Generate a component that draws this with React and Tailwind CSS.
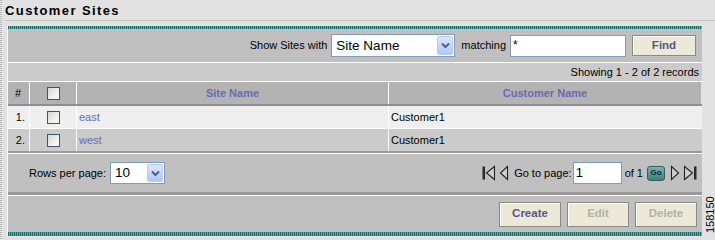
import React from "react";

const TEAL = "bg-[repeating-linear-gradient(90deg,#1d6b67_0px,#1d6b67_1px,#6aaaa5_1px,#6aaaa5_2px)]";

function Chevron() {
  return (
    <svg width="9" height="7" viewBox="0 0 9 7">
      <path d="M1 1.5 L4.5 5 L8 1.5" fill="none" stroke="#4d6185" strokeWidth="2" />
    </svg>
  );
}

function XpSelect({ value, className, textClass }) {
  return (
    <div className={`flex items-stretch bg-white border border-[#7f9db9] ${className}`}>
      <span className={`flex-1 pl-[4px] flex items-center leading-none text-black ${textClass}`}>{value}</span>
      <div className="w-[16px] m-px flex items-center justify-center rounded-[2px] border border-[#b8cbf5] bg-gradient-to-b from-[#dbe6fd] to-[#b3c7f5]">
        <Chevron />
      </div>
    </div>
  );
}

function Checkbox() {
  return <div className="w-[13px] h-[13px] border border-[#3d5670] bg-gradient-to-br from-[#d8d8d0] to-white" />;
}

function NavIcon({ dir, bar }) {
  const left = dir === "left";
  return (
    <svg width={bar ? 14 : 10} height="16" viewBox={bar ? "0 0 14 16" : "0 0 10 16"}>
      {bar && left && <rect x="0.5" y="1.5" width="2.5" height="13" fill="#2a2a2a" />}
      {left ? (
        <path d={bar ? "M12.5 1.5 L4.5 8 L12.5 14.5 Z" : "M8.5 1.5 L1.5 8 L8.5 14.5 Z"} fill="#cfcfcf" stroke="#222" strokeWidth="1.1" />
      ) : (
        <path d={bar ? "M1.5 1.5 L9.5 8 L1.5 14.5 Z" : "M1.5 1.5 L8.5 8 L1.5 14.5 Z"} fill="#cfcfcf" stroke="#222" strokeWidth="1.1" />
      )}
      {bar && !left && <rect x="11" y="1.5" width="2.5" height="13" fill="#2a2a2a" />}
    </svg>
  );
}

function Btn({ label, disabled, className = "" }) {
  return (
    <div
      className={`flex items-center justify-center bg-[#ece9d8] border border-[#8a8a80] shadow-[inset_1px_1px_0_#fff] font-bold text-[11.5px] ${
        disabled ? "text-[#b2b2a8]" : "text-[#555586]"
      } ${className}`}
    >
      {label}
    </div>
  );
}

export default function App() {
  return (
    <div className="relative w-[715px] h-[240px] overflow-hidden bg-[#e2e2e2] font-['Liberation_Sans',Arial,sans-serif] text-[11px] text-black">
      {/* scan edge */}
      <div className="absolute left-0 top-0 w-[2px] h-full bg-[repeating-linear-gradient(180deg,#b8b8b8_0px,#b8b8b8_1px,#e8e8e8_1px,#e8e8e8_2px)]" />

      <div className="h-[20px] pl-[5px] pt-[3px] font-bold text-[13px] tracking-[1.4px] leading-[15px]">Customer Sites</div>
      <div className="ml-[5px] h-px bg-[#c6c6be]" />

      <div className="ml-[7px] mt-[5px] w-[695px] border-l border-white">
        <div className={`h-[3px] ${TEAL}`} />

        {/* search band */}
        <div className="h-[33px] bg-[#c0c0c0] flex items-center justify-end pr-[6px]">
          <span className="mr-[4px]">Show Sites with</span>
          <XpSelect value="Site Name" className="w-[124px] h-[23px]" textClass="text-[13.5px]" />
          <span className="ml-[6px] mr-[4px]">matching</span>
          <div className="w-[116px] h-[22px] bg-white border border-[#7f9db9] pl-[2px] text-[12px] leading-[18px]">*</div>
          <Btn label="Find" className="ml-[6px] w-[64px] h-[21px]" />
        </div>
        <div className="h-px bg-white" />

        {/* showing band */}
        <div className="h-[18px] bg-[#cbcbcb] flex items-center justify-end pr-[3px]">Showing 1 - 2 of 2 records</div>
        <div className="h-px bg-white" />

        {/* table */}
        <div className="grid grid-cols-[22px_47px_312px_312px]">
          <div className="h-[22px] bg-[#b3b3b3] border-r border-white flex items-center pl-[7px]">#</div>
          <div className="h-[22px] bg-[#b3b3b3] border-r border-white flex items-center pl-[17px]">
            <Checkbox />
          </div>
          <div className="h-[22px] bg-[#b3b3b3] border-r border-white flex items-center justify-center font-bold text-[#6a6ab4]">Site Name</div>
          <div className="h-[22px] bg-[#b3b3b3] flex items-center justify-center font-bold text-[#6a6ab4]">Customer Name</div>
        </div>
        <div className="h-[2px] bg-[#8e8e8e]" />

        {[
          { n: "1.", site: "east", bg: "bg-[#efefef]" },
          { n: "2.", site: "west", bg: "bg-[#cbcbcb]" },
        ].map((r, i) => (
          <React.Fragment key={r.n}>
            {i > 0 && <div className="h-px bg-white" />}
            <div className={`grid grid-cols-[22px_47px_312px_312px] h-[22px] ${r.bg}`}>
              <div className="border-r border-white flex items-center justify-end pr-[4px]">{r.n}</div>
              <div className="border-r border-white flex items-center pl-[17px]">
                <Checkbox />
              </div>
              <div className="border-r border-white flex items-center pl-[2px] text-[#6a6ab4]">{r.site}</div>
              <div className="flex items-center pl-[2px]">Customer1</div>
            </div>
          </React.Fragment>
        ))}
        <div className="h-[2px] bg-[#999]" />
        <div className="h-px bg-white" />

        {/* pagination band */}
        <div className="h-[38px] bg-[#c0c0c0] flex items-center pl-[21px] pr-[5px]">
          <span className="text-[11px] mr-[4px]">Rows per page:</span>
          <XpSelect value="10" className="w-[55px] h-[22px]" textClass="text-[13.5px]" />
          <div className="flex-1" />
          <NavIcon dir="left" bar />
          <div className="w-[3px]" />
          <NavIcon dir="left" />
          <span className="ml-[5px] mr-px text-[11px]">Go to page:</span>
          <div className="w-[49px] h-[22px] bg-white border border-[#7f9db9] pl-[2px] text-[13px] leading-[20px]">1</div>
          <span className="ml-[3px] text-[11px]">of 1</span>
          <div className="ml-[4px] w-[18px] h-[15px] rounded-[3px] border border-[#2f5f5f] bg-gradient-to-b from-[#7cb1ae] to-[#3f7e7c] flex items-center justify-center text-[8px] font-bold text-[#0c2a2a]">Go</div>
          <div className="w-[5px]" />
          <NavIcon dir="right" />
          <div className="w-[3px]" />
          <NavIcon dir="right" bar />
        </div>
        <div className="h-[3px] bg-[#999]" />
        <div className="h-px bg-white" />

        {/* buttons band */}
        <div className="h-[36px] bg-[#c0c0c0] flex items-center justify-end gap-[6px] pr-[5px]">
          <Btn label="Create" className="w-[62px] h-[25px]" />
          <Btn label="Edit" disabled className="w-[62px] h-[25px]" />
          <Btn label="Delete" disabled className="w-[62px] h-[25px]" />
        </div>
        <div className={`h-[4px] ${TEAL}`} />
      </div>

      <div className="absolute left-[692px] top-[209px] w-[36px] h-[12px] -rotate-90 text-[11px] leading-[12px] text-center">158150</div>
    </div>
  );
}
